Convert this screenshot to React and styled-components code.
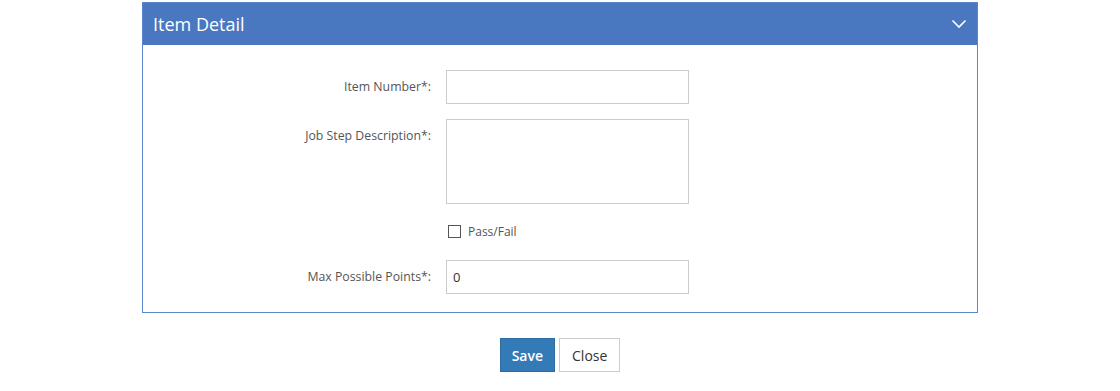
import React from 'react';
import styled, { createGlobalStyle } from 'styled-components';

const GlobalStyle = createGlobalStyle`
  html, body {
    margin: 0;
    padding: 0;
    background: #fff;
    font-family: "Open Sans", "Liberation Sans", sans-serif;
  }
`;

const Page = styled.div`
  width: 1120px;
  padding-top: 2px;
  display: flex;
  flex-direction: column;
  align-items: center;
`;

const Panel = styled.section`
  width: 836px;
  box-sizing: border-box;
  border: 1px solid #5b87cf;
`;

const PanelHeader = styled.div`
  height: 42px;
  background: #4a78c0;
  display: flex;
  align-items: center;
  justify-content: space-between;
  padding: 0 10px 0 10px;
  color: #fff;
`;

const PanelTitle = styled.h3`
  margin: 0;
  font-size: 18px;
  font-weight: 400;
`;

const PanelBody = styled.div`
  padding: 25px 0 18px;
  display: grid;
  grid-template-columns: 288px 243px;
  column-gap: 15px;
  row-gap: 15px;
  align-items: start;
`;

const Label = styled.label`
  text-align: right;
  font-size: 12.3px;
  color: #555;
  padding-top: 8px;
`;

const TextInput = styled.input`
  box-sizing: border-box;
  width: 243px;
  height: 34px;
  border: 1px solid #ccc;
  padding: 6px 6px;
  font-family: inherit;
  font-size: 13px;
  color: #333;
  outline: none;
`;

const TextArea = styled.textarea`
  box-sizing: border-box;
  width: 243px;
  height: 85px;
  border: 1px solid #ccc;
  padding: 6px;
  font-family: inherit;
  resize: none;
  display: block;
  outline: none;
`;

const CheckRow = styled.label`
  display: flex;
  align-items: center;
  gap: 7px;
  padding: 4px 0 5px 2px;
  font-size: 12px;
  color: #555;
`;

const CheckBox = styled.span`
  width: 11px;
  height: 11px;
  border: 1px solid #555;
  background: #fff;
`;

const Actions = styled.div`
  margin-top: 25px;
  display: flex;
  gap: 4px;
`;

const Button = styled.button`
  height: 34px;
  padding: 0 ${p => (p.$primary ? '11px' : '12px')};
  font-family: inherit;
  font-size: 14px;
  border: 1px solid ${p => (p.$primary ? '#2e6da4' : '#ccc')};
  background: ${p => (p.$primary ? '#337ab7' : '#fff')};
  color: ${p => (p.$primary ? '#fff' : '#333')};
  font-weight: ${p => (p.$primary ? 600 : 400)};
`;

const Chevron = () => (
  <svg width="16" height="10" viewBox="0 0 16 10">
    <path d="M1.5 1.5 L8 8 L14.5 1.5" fill="none" stroke="#fff" strokeWidth="1.6" />
  </svg>
);

export default function App() {
  return (
    <Page>
      <GlobalStyle />
      <Panel>
        <PanelHeader>
          <PanelTitle>Item Detail</PanelTitle>
          <Chevron />
        </PanelHeader>
        <PanelBody>
          <Label>Item Number*:</Label>
          <TextInput />
          <Label>Job Step Description*:</Label>
          <TextArea />
          <span />
          <CheckRow>
            <CheckBox />
            Pass/Fail
          </CheckRow>
          <Label>Max Possible Points*:</Label>
          <TextInput defaultValue="0" />
        </PanelBody>
      </Panel>
      <Actions>
        <Button $primary>Save</Button>
        <Button>Close</Button>
      </Actions>
    </Page>
  );
}
